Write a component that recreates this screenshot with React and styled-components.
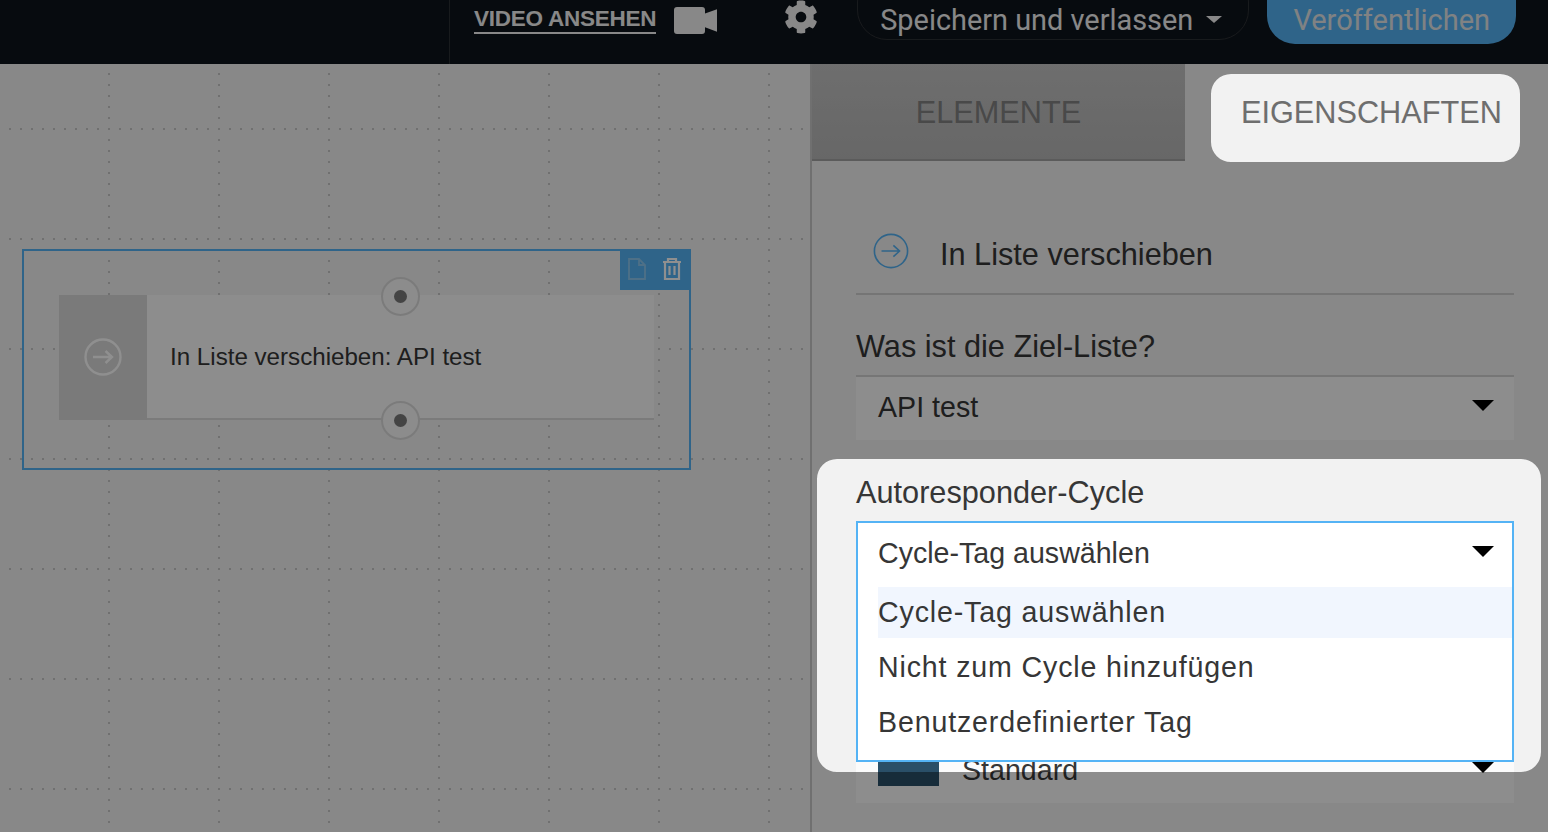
import React from 'react'
import styled, { createGlobalStyle } from 'styled-components'
import { FaCog } from 'react-icons/fa'

const GlobalStyle = createGlobalStyle`
  html, body { margin: 0; padding: 0; height: 100%; overflow: hidden; }
  body { font-family: "Liberation Sans", Arial, sans-serif; color: #333; }
`

const Page = styled.div`
  position: relative;
  width: 1548px;
  height: 832px;
  overflow: hidden;
  background: #f2f2f2;
`
const TopBar = styled.header`
  display: flex;
  align-items: flex-start;
  height: 64px;
  padding-left: 449px;
  box-sizing: border-box;
  overflow: hidden;
  background: #0e141b;
`
const VideoPart = styled.div`
  display: flex;
  align-items: flex-start;
  height: 64px;
  padding-left: 24px;
  border-left: 1px solid #2c3034;
  box-sizing: border-box;
`
const VideoLink = styled.a`
  margin-top: 6px;
  padding-bottom: 1px;
  border-bottom: 2px solid #f2f2f2;
  font-size: 22.5px;
  line-height: 25px;
  font-weight: 700;
  letter-spacing: -0.25px;
  color: #f2f2f2;
`
const CameraIcon = styled.svg`
  margin: 7px 0 0 18px;
  width: 44px;
  height: 27px;
  fill: #f2f2f2;
`
const GearIcon = styled(FaCog)`
  margin: 0 0 0 66px;
  width: 34px;
  height: 34px;
  color: #f2f2f2;
`
const SaveButton = styled.button`
  display: flex;
  align-items: center;
  width: 392px;
  height: 68px;
  margin: -28px 0 0 39px;
  padding: 28px 0 0 22px;
  border: 1px solid #2c3034;
  border-radius: 30px;
  box-sizing: border-box;
  background: none;
  font-family: Roboto, sans-serif;
  font-size: 28.9px;
  color: #f2f2f2;
`
const SaveCaret = styled.span`
  margin: -2px 0 0 13px;
  border-top: 7px solid #f2f2f2;
  border-left: 8px solid transparent;
  border-right: 8px solid transparent;
`
const PublishButton = styled.button`
  width: 249px;
  height: 72px;
  margin: -28px 0 0 18px;
  padding: 24px 0 0;
  border: none;
  border-radius: 28px;
  background: #54b3f5;
  font-family: Roboto, sans-serif;
  font-size: 29px;
  color: #e4e8ea;
`
const Main = styled.main`
  display: flex;
  height: 768px;
`
const Canvas = styled.section`
  position: relative;
  width: 810px;
  flex-shrink: 0;
  overflow: hidden;
`
const GridLayer = styled.svg`
  position: absolute;
  inset: 0;
  width: 100%;
  height: 100%;
`
const Selection = styled.div`
  position: absolute;
  left: 22px;
  top: 185px;
  width: 669px;
  height: 221px;
  border: 2px solid #54b3f5;
  box-sizing: border-box;
`
const ActionBox = styled.div`
  position: absolute;
  right: 0;
  top: 0;
  width: 69px;
  height: 39px;
  padding-bottom: 4px;
  display: flex;
  align-items: center;
  justify-content: center;
  gap: 15px;
  box-sizing: border-box;
  background: #54b3f5;
`
const ActionIcon = styled.svg`
  width: 20px;
  height: 24px;
  fill: none;
  stroke: ${p => p.$tone};
  stroke-width: ${p => p.$weight};
`
const NodeCard = styled.div`
  position: absolute;
  left: 59px;
  top: 231px;
  width: 595px;
  height: 125px;
  display: flex;
  box-sizing: border-box;
  border-bottom: 2px solid #dcdcdc;
  background: #fbfbfb;
`
const NodeIconBox = styled.div`
  display: flex;
  align-items: center;
  justify-content: center;
  width: 88px;
  height: 125px;
  padding-bottom: 2px;
  box-sizing: border-box;
  background: #d9d9d9;
`
const NodeText = styled.div`
  display: flex;
  align-items: center;
  padding-left: 23px;
  font-size: 24.15px;
  color: #363636;
`
const Connector = styled.div`
  position: absolute;
  left: 381px;
  top: ${p => p.$top}px;
  width: 39px;
  height: 39px;
  display: flex;
  align-items: center;
  justify-content: center;
  box-sizing: border-box;
  border: 2px solid #dcdcdc;
  border-radius: 50%;
  background: #f9f9f9;
  &::after {
    content: "";
    width: 13px;
    height: 13px;
    border-radius: 50%;
    background: #7a7a7a;
  }
`
const Sidebar = styled.aside`
  position: relative;
  flex: 1;
  border-left: 2px solid #c8c8c8;
`
const Tabs = styled.div`
  display: flex;
  height: 97px;
`
const PassiveTab = styled.div`
  display: flex;
  align-items: center;
  justify-content: center;
  width: 373px;
  padding-top: 2px;
  box-sizing: border-box;
  border-bottom: 2px solid #a2a2a2;
  background: linear-gradient(#c4c4c4, #b8b8b8);
  font-size: 30.7px;
  color: #828282;
`
const ActiveTab = styled.div`
  display: flex;
  align-items: center;
  padding-left: 56px;
  font-size: 30.7px;
  color: #6e6e6e;
`
const Content = styled.div`
  padding: 0 34px 0 44px;
`
const TitleRow = styled.div`
  display: flex;
  align-items: flex-start;
  height: 134px;
  padding: 72px 0 0 17px;
  box-sizing: border-box;
  border-bottom: 2px solid #d0d0d0;
`
const TitleText = styled.div`
  margin: 4px 0 0 31px;
  font-size: 30.7px;
  color: #363636;
`
const FieldLabel = styled.label`
  display: block;
  height: 34px;
  margin-top: ${p => p.$gap}px;
  font-size: 30.7px;
  line-height: 34px;
  color: #363636;
`
const SelectBox = styled.div`
  position: relative;
  display: flex;
  align-items: center;
  height: 65px;
  margin-top: ${p => p.$gap || 0}px;
  padding: 0 0 2px 22px;
  box-sizing: border-box;
  border-top: 2px solid #d2d2d2;
  background: #fbfbfb;
  font-size: 28.6px;
  color: #363636;
`
const OpenSelect = styled(SelectBox)`
  padding: 0 0 4px 20px;
  border: 2px solid #54b3f5;
  border-bottom: none;
  background: #fff;
  height: 66px;
`
const Caret = styled.span`
  position: absolute;
  right: ${p => p.$right || 20}px;
  top: ${p => p.$top}px;
  border-top: 11px solid #000;
  border-left: 11px solid transparent;
  border-right: 11px solid transparent;
`
const Menu = styled.ul`
  position: absolute;
  left: 0;
  right: 0;
  top: 66px;
  z-index: 3;
  height: 175px;
  margin: 0;
  padding: 0 0 0 20px;
  list-style: none;
  box-sizing: border-box;
  border: 2px solid #54b3f5;
  border-top: none;
  background: #fff;
`
const MenuItem = styled.li`
  display: flex;
  align-items: center;
  height: ${p => (p.$active ? 51 : 55)}px;
  background: ${p => (p.$active ? '#f1f6fe' : 'transparent')};
  font-size: 28.6px;
  letter-spacing: 0.85px;
  color: #363636;
  &:nth-child(2) { margin-top: 2px; }
`
const Swatch = styled.span`
  width: 61px;
  height: 30px;
  margin: 0 23px 0 0;
  background: #2a4f68;
`
const CycleField = styled.div`
  position: relative;
  margin-top: 11px;
`
const Dimmer = styled.div`
  position: absolute;
  inset: 0;
  z-index: 5;
  background: rgba(0, 0, 0, 0.44);
  clip-path: ${p => `path(evenodd, "${p.$shape}")`};
`

// rounded rect for the spotlight cut-outs
const roundRect = (x, y, w, h, r) =>
  `M${x + r} ${y}H${x + w - r}A${r} ${r} 0 0 1 ${x + w} ${y + r}V${y + h - r}A${r} ${r} 0 0 1 ${x + w - r} ${y + h}H${x + r}A${r} ${r} 0 0 1 ${x} ${y + h - r}V${y + r}A${r} ${r} 0 0 1 ${x + r} ${y}Z`

const dimShape = `M0 0H1548V832H0Z ${roundRect(1211, 74, 309, 88, 20)} ${roundRect(817, 459, 724, 313, 20)}`

const ArrowCircle = ({ size, color, width }) => (
  <svg width={size} height={size} viewBox="0 0 38 38" fill="none" stroke={color} strokeWidth={width}>
    <circle cx="19" cy="19" r="17.5" />
    <path d="M9 19H28M21.5 13L28 19L21.5 25" />
  </svg>
)

function App() {
  return (
    <Page>
      <GlobalStyle />
      <TopBar>
        <VideoPart>
          <VideoLink>VIDEO ANSEHEN</VideoLink>
          <CameraIcon viewBox="0 0 44 27">
            <path d="M3 0H28A3 3 0 0 1 31 3V24A3 3 0 0 1 28 27H3A3 3 0 0 1 0 24V3A3 3 0 0 1 3 0Z" />
            <path d="M31 6.5L43 2.3V24.7L31 20.3Z" />
          </CameraIcon>
        </VideoPart>
        <GearIcon />
        <SaveButton>
          Speichern und verlassen
          <SaveCaret />
        </SaveButton>
        <PublishButton>Veröffentlichen</PublishButton>
      </TopBar>
      <Main>
        <Canvas>
          <GridLayer>
            <defs>
              <pattern id="dots" x="108" y="64" width="110" height="110" patternUnits="userSpaceOnUse">
                {Array.from({ length: 10 }).map((_, i) => (
                  <React.Fragment key={i}>
                    <rect x={i * 11} y="0" width="2" height="2" fill="#c8c8c8" />
                    <rect x="0" y={i * 11} width="2" height="2" fill="#c8c8c8" />
                  </React.Fragment>
                ))}
              </pattern>
            </defs>
            <rect width="100%" height="100%" fill="url(#dots)" />
          </GridLayer>
          <NodeCard>
            <NodeIconBox>
              <ArrowCircle size={38} color="#fff" width={2.4} />
            </NodeIconBox>
            <NodeText>In Liste verschieben: API test</NodeText>
          </NodeCard>
          <Connector $top={213} />
          <Connector $top={337} />
          <Selection>
            <ActionBox>
              <ActionIcon $tone="#8cc8f0" $weight={1.8} viewBox="0 0 20 24">
                <path d="M2 2H12L18 8V22H2Z M12 2V8H18" />
              </ActionIcon>
              <ActionIcon $tone="#fff" $weight={2.2} viewBox="0 0 20 24">
                <path d="M1 5H19M6 5V2H14V5M3 5V22H17V5M7.5 9V18M12.5 9V18" />
              </ActionIcon>
            </ActionBox>
          </Selection>
        </Canvas>
        <Sidebar>
          <Tabs>
            <PassiveTab>ELEMENTE</PassiveTab>
            <ActiveTab>EIGENSCHAFTEN</ActiveTab>
          </Tabs>
          <Content>
            <TitleRow>
              <ArrowCircle size={36} color="#54b3f5" width={1.7} />
              <TitleText>In Liste verschieben</TitleText>
            </TitleRow>
            <FieldLabel $gap={35}>Was ist die Ziel-Liste?</FieldLabel>
            <SelectBox $gap={11}>
              API test
              <Caret $top={23} />
            </SelectBox>
            <FieldLabel $gap={36}>Autoresponder-Cycle</FieldLabel>
            <CycleField>
              <OpenSelect>
                Cycle-Tag auswählen
                <Caret $top={23} $right={18} />
              </OpenSelect>
              <Menu>
                <MenuItem $active>Cycle-Tag auswählen</MenuItem>
                <MenuItem>Nicht zum Cycle hinzufügen</MenuItem>
                <MenuItem>Benutzerdefinierter Tag</MenuItem>
              </Menu>
            </CycleField>
            <SelectBox $gap={151}>
              <Swatch />
              Standard
              <Caret $top={22} />
            </SelectBox>
          </Content>
        </Sidebar>
      </Main>
      <Dimmer $shape={dimShape} />
    </Page>
  )
}

export default App
